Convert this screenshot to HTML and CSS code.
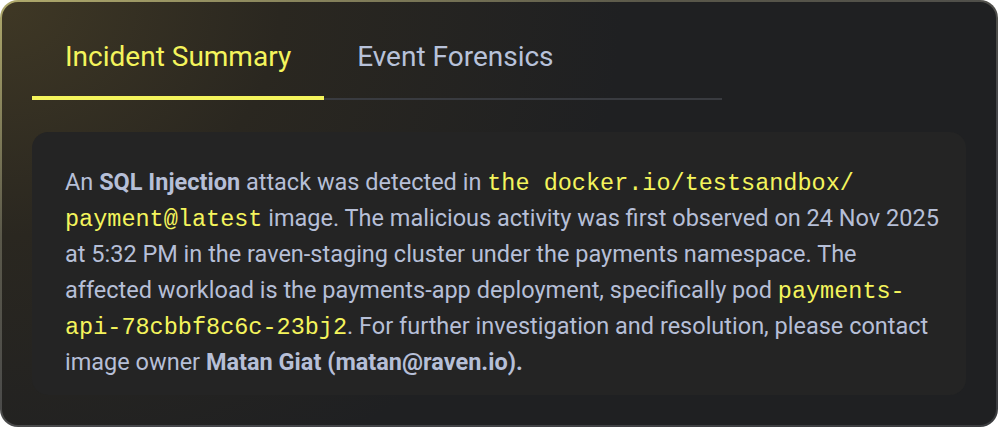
FILE: index.html
```html
<!DOCTYPE html>
<html>
<head>
<meta charset="utf-8">
<link rel="stylesheet" href="styles.css">
</head>
<body>
<div class="card">
  <div class="tabs">
    <div class="tab active">Incident Summary</div>
    <div class="tab">Event Forensics</div>
  </div>
  <div class="panel">
    <p class="summary">An <b>SQL Injection</b> attack was detected in <code>the docker.io/testsandbox/<wbr>payment@latest</code> image. The malicious activity was first observed on 24 Nov 2025 at 5:32 PM in the raven-staging cluster under the payments namespace. The affected workload is the payments-app deployment, specifically pod <code>payments-api-78cbbf8c6c-23bj2</code>. For further investigation and resolution, please contact image owner <b>Matan Giat (matan@raven.io).</b></p>
  </div>
</div>
</body>
</html>
```
FILE: styles.css
```css
html, body {
  margin: 0;
  padding: 0;
  background: #ffffff;
}
body {
  width: 998px;
  height: 428px;
  overflow: hidden;
  font-family: Roboto, "Noto Sans", sans-serif;
}
.card {
  box-sizing: border-box;
  width: 998px;
  height: 427px;
  border: 2px solid transparent;
  border-radius: 18px;
  background:
    radial-gradient(ellipse 620px 520px at 0 0, #3f3825 0%, #2a2720 45%, #1f2022 100%) padding-box,
    linear-gradient(160deg, #b0aa6c 0%, #5a584a 30%, #45464a 60%, #3a3b3e 100%) border-box;
  padding: 30px 30px 0 30px;
}
.tabs {
  display: flex;
  width: 690px;
  border-bottom: 2px solid #393b40;
}
.tab {
  font-size: 28px;
  line-height: 34px;
  padding: 8px 33px 24px;
  color: #b8c2da;
  margin-bottom: -2px;
}
.tab.active {
  color: #f4f45c;
  border-bottom: 4px solid #f4f45c;
  padding-bottom: 22px;
}
.panel {
  margin-top: 32px;
  background: #242424;
  border-radius: 16px;
  padding: 32px 24px 0 33px;
  height: 263px;
  box-sizing: border-box;
}
.summary {
  margin: 0;
  font-size: 23.5px;
  line-height: 36px;
  color: #b6bfd7;
}
.summary b {
  font-weight: 700;
}
.summary code {
  font-family: "Liberation Mono", "DejaVu Sans Mono", monospace;
  font-size: 23.5px;
  line-height: 20px;
  color: #f4f45c;
}
```
